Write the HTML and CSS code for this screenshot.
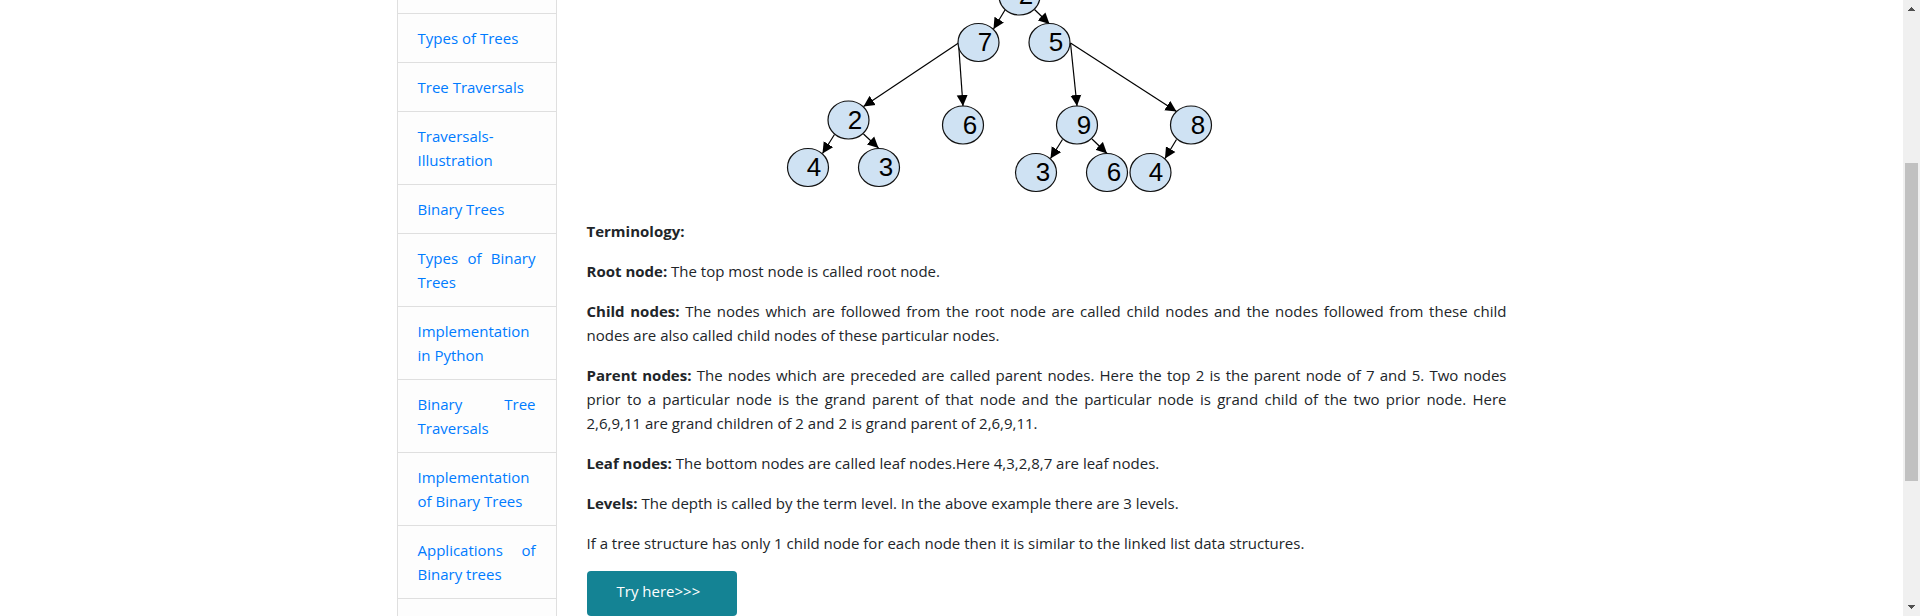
FILE: index.html
```html
<!DOCTYPE html>
<html lang="en">
<head>
<meta charset="utf-8">
<title>Trees</title>
<link rel="stylesheet" href="styles.css">
</head>
<body>
<div class="viewport">
  <div class="page">
    <div class="container">
      <nav class="sidebar" aria-label="Topics">
        <ul class="topics">
          <li class="topic topic-cut"></li>
          <li class="topic"><a href="#types">Types of Trees</a></li>
          <li class="topic"><a href="#traversals">Tree Traversals</a></li>
          <li class="topic"><a href="#illustration">Traversals-Illustration</a></li>
          <li class="topic"><a href="#binary">Binary Trees</a></li>
          <li class="topic"><a href="#binary-types">Types of Binary Trees</a></li>
          <li class="topic"><a href="#python">Implementation in Python</a></li>
          <li class="topic"><a href="#binary-traversals">Binary Tree Traversals</a></li>
          <li class="topic"><a href="#binary-implementation">Implementation of Binary Trees</a></li>
          <li class="topic"><a href="#applications">Applications of Binary trees</a></li>
          <li class="topic topic-last"></li>
        </ul>
      </nav>
      <main class="content">
        <svg class="tree" viewBox="0 0 920 203" role="img" aria-label="Tree diagram">
          <defs>
            <marker id="arrow" markerUnits="userSpaceOnUse" markerWidth="12" markerHeight="12" refX="11" refY="6" orient="auto">
              <path d="M0 0.5 L11 6 L0 11.5 Z"/>
            </marker>
          </defs>
          <g class="edges">
            <path d="M418 10 L406.5 29"/>
            <path d="M447.5 9.5 L462.5 24"/>
            <path d="M371.5 43 L276.5 106.5"/>
            <path d="M371.5 43 L376 106"/>
            <path d="M483.5 43 L490 106"/>
            <path d="M483.5 43 L589.5 111.5"/>
            <path d="M247.5 134.5 L235.5 153.5"/>
            <path d="M276.5 134 L291.5 148"/>
            <path d="M475.5 139.5 L463.5 158.5"/>
            <path d="M505 139 L520 153.5"/>
            <path d="M589.5 139.5 L578 158.5"/>
          </g>
          <g class="nodes">
            <ellipse cx="432.5" cy="-4" rx="20.5" ry="19"/>
            <ellipse cx="391.5" cy="42.5" rx="20.5" ry="19"/>
            <ellipse cx="462.5" cy="42.5" rx="20.5" ry="19"/>
            <ellipse cx="261.5" cy="120" rx="20.5" ry="19"/>
            <ellipse cx="376" cy="125" rx="20.5" ry="19"/>
            <ellipse cx="490" cy="125" rx="20.5" ry="19"/>
            <ellipse cx="604" cy="125" rx="20.5" ry="19"/>
            <ellipse cx="221" cy="167.5" rx="20.5" ry="19"/>
            <ellipse cx="292" cy="167.5" rx="20.5" ry="19"/>
            <ellipse cx="449" cy="172.5" rx="20.5" ry="19"/>
            <ellipse cx="520" cy="172.5" rx="20.5" ry="19"/>
            <ellipse cx="563.5" cy="172.5" rx="20.5" ry="19"/>
          </g>
          <g class="keys">
            <text x="439" y="4">2</text>
            <text x="398" y="51">7</text>
            <text x="469" y="51">5</text>
            <text x="268" y="129">2</text>
            <text x="383" y="134">6</text>
            <text x="497" y="134">9</text>
            <text x="611" y="134">8</text>
            <text x="227" y="176">4</text>
            <text x="299" y="176">3</text>
            <text x="456" y="181">3</text>
            <text x="527" y="181">6</text>
            <text x="569" y="181">4</text>
          </g>
        </svg>
        <p><b>Terminology:</b></p>
        <p><b>Root node:</b> The top most node is called root node.</p>
        <p><b>Child nodes:</b> The nodes which are followed from the root node are called child nodes and the nodes followed from these child nodes are also called child nodes of these particular nodes.</p>
        <p><b>Parent nodes:</b> The nodes which are preceded are called parent nodes. Here the top 2 is the parent node of 7 and 5. Two nodes prior to a particular node is the grand parent of that node and the particular node is grand child of the two prior node. Here 2,6,9,11 are grand children of 2 and 2 is grand parent of 2,6,9,11.</p>
        <p><b>Leaf nodes:</b> The bottom nodes are called leaf nodes.Here 4,3,2,8,7 are leaf nodes.</p>
        <p><b>Levels:</b> The depth is called by the term level. In the above example there are 3 levels.</p>
        <p>If a tree structure has only 1 child node for each node then it is similar to the linked list data structures.</p>
        <button class="try" type="button">Try here&gt;&gt;&gt;</button>
      </main>
    </div>
  </div>
  <div class="scrollbar" aria-hidden="true">
    <svg class="arrow" viewBox="0 0 17 17"><path d="M5 11V10H6V9H7V8H8V7H9V8H10V9H11V10H12V11Z"/></svg>
    <div class="track"><div class="thumb"></div></div>
    <svg class="arrow" viewBox="0 0 17 17"><path d="M5 6V7H6V8H7V9H8V10H9V9H10V8H11V7H12V6Z"/></svg>
  </div>
</div>
</body>
</html>
```

FILE: styles.css
```css
* {
  box-sizing: border-box;
}

body {
  margin: 0;
  background: #fff;
  color: #212529;
  font-family: "Segoe UI", "Open Sans", "Noto Sans", sans-serif;
  font-size: 15px;
  line-height: 24px;
  text-align: justify;
}

.viewport {
  display: flex;
  height: 100vh;
  overflow: hidden;
}

.page {
  flex: 1;
  min-width: 0;
  overflow: hidden;
}

.container {
  display: grid;
  grid-template-columns: 2fr 10fr;
  max-width: 1140px;
  margin: 0 auto;
}

.sidebar,
.content {
  min-width: 0;
  padding: 0 15px;
}

.topics {
  margin: 0;
  padding: 0;
  list-style: none;
  border: 1px solid #dfdfdf;
  border-width: 0 1px;
  background: #fdfdfd;
}

.topic {
  padding: 12px 20px;
  border-bottom: 1px solid #dfdfdf;
}

.topic-cut {
  padding: 13px 0 0;
}

.topic-last {
  min-height: 49px;
}

.topic a {
  color: #007bff;
  text-decoration: none;
}

.tree {
  display: block;
  width: 100%;
  margin-bottom: 16px;
}

.edges {
  fill: none;
  stroke: #000;
  stroke-width: 1.2;
}

.edges path {
  marker-end: url(#arrow);
}

.edges + .nodes {
  fill: #cfe2f3;
  stroke: #111;
  stroke-width: 1.2;
}

.keys {
  fill: #000;
  font-family: "Liberation Sans", Arial, sans-serif;
  font-size: 26px;
  text-anchor: middle;
}

p {
  margin: 0 0 16px;
}

.try {
  display: block;
  padding: 8px 30px 13px;
  min-width: 150px;
  border: 0;
  border-radius: 4px;
  background: #148394;
  color: #fff;
  font: inherit;
  text-align: left;
}

.scrollbar {
  display: flex;
  flex-direction: column;
  width: 17px;
  background: #f0f0f0;
}

.arrow {
  width: 17px;
  height: 17px;
  fill: #505050;
  shape-rendering: crispEdges;
}

.track {
  display: grid;
  flex: 1;
  grid-template-rows: 146fr 318fr 118fr;
  padding: 0 2px;
}

.thumb {
  grid-row: 2;
  background: #c1c1c1;
}
```
